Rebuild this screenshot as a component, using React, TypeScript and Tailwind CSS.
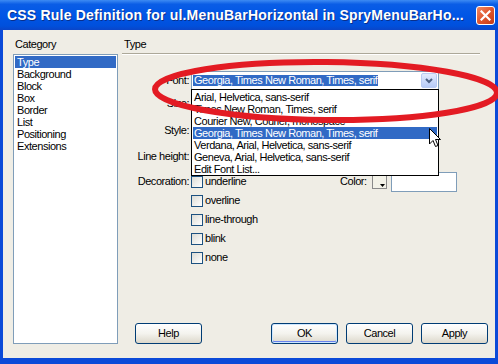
import React from "react";

const categories = ["Type", "Background", "Block", "Box", "Border", "List", "Positioning", "Extensions"];

const fonts = [
  "Arial, Helvetica, sans-serif",
  "Times New Roman, Times, serif",
  "Courier New, Courier, monospace",
  "Georgia, Times New Roman, Times, serif",
  "Verdana, Arial, Helvetica, sans-serif",
  "Geneva, Arial, Helvetica, sans-serif",
  "Edit Font List...",
];

const decorations = ["underline", "overline", "line-through", "blink", "none"];

function Checkbox() {
  return <span className="w-[12px] h-[12px] shrink-0 border border-[#1c5180] bg-gradient-to-br from-[#dcdcd5] to-white" />;
}

function XPButton({ label, isDefault }: { label: string; isDefault?: boolean }) {
  return (
    <button
      className={`w-[67px] h-[21px] rounded-[3px] border border-[#003c74] bg-gradient-to-b from-white via-[#f4f3ee] to-[#dcd8cb] text-[11px] leading-none ${
        isDefault ? "shadow-[inset_0_0_0_1px_#cee7ff,inset_0_-1px_0_1px_#6982ee]" : ""
      }`}
    >
      {label}
    </button>
  );
}

export default function App() {
  return (
    <div className="relative w-[498px] h-[364px] flex flex-col overflow-hidden bg-[#0b4ad8] font-['Liberation_Sans',Arial,sans-serif] text-[11px] tracking-[-0.45px] text-black">
      {/* Title bar */}
      <div className="h-[30px] shrink-0 flex items-center pl-[7px] pr-[3px] bg-[linear-gradient(to_bottom,#3d8bf3_0%,#0a5de6_14%,#0056e6_50%,#0050dc_86%,#0a45c8_100%)]">
        <span className="text-white font-bold text-[14px] tracking-[0.2px] [text-shadow:1px_1px_0_#0a2f8a]">
          CSS Rule Definition for ul.MenuBarHorizontal in SpryMenuBarHo...
        </span>
        <button className="ml-auto w-[19px] h-[19px] rounded-[3px] border border-white bg-gradient-to-br from-[#f08a64] via-[#e0552c] to-[#c43b16] flex items-center justify-center">
          <svg width="11" height="11" viewBox="0 0 11 11">
            <path d="M1.5 1.5 L9.5 9.5 M9.5 1.5 L1.5 9.5" stroke="white" strokeWidth="2.2" strokeLinecap="square" />
          </svg>
        </button>
      </div>

      {/* Body */}
      <div className="flex-1 flex mx-[3px] mb-[6px] bg-[#efede5] pt-[8px] pb-[14px] pl-[10px] pr-[7px] gap-[4px]">
        {/* Category column */}
        <div className="w-[105px] flex flex-col">
          <div className="h-[13px] leading-[13px] pl-[2px]">Category</div>
          <div className="mt-[3px] h-[290px] border border-[#7f9db9] bg-white pt-px px-px flex flex-col">
            {categories.map((c, i) => (
              <div
                key={c}
                className={`h-[12px] leading-[12px] pl-[2px] ${i === 0 ? "bg-[#316ac5] text-white" : ""}`}
              >
                {c}
              </div>
            ))}
          </div>
        </div>

        {/* Type panel */}
        <div className="flex-1 flex flex-col">
          <div className="h-[13px] leading-[13px] pl-[2px]">Type</div>
          <div className="mt-[2px] mr-[8px] h-px bg-[#aca899] shadow-[0_1px_0_white]" />

          <div className="mt-[17px] flex flex-col">
            {/* Font */}
            <div className="h-[19px] flex items-center">
              <span className="w-[67px] text-right">Font:</span>
              <div className="relative ml-[2px] w-[248px] h-[19px] border border-[#7f9db9] bg-white flex items-center pl-px pr-[1px]">
                <span className="bg-[#316ac5] text-white px-px leading-[11px]">
                  Georgia, Times New Roman, Times, serif
                </span>
                <span className="ml-auto w-[16px] h-[15px] rounded-[2px] border border-[#b9cbf3] bg-gradient-to-b from-[#e3ebfd] to-[#b7cbf7] flex items-center justify-center">
                  <svg width="8" height="6" viewBox="0 0 8 6">
                    <path d="M1 1 L4 4 L7 1" stroke="#4d6185" strokeWidth="2" fill="none" />
                  </svg>
                </span>

                {/* Open list */}
                <div className="absolute left-[-1px] top-[17px] w-[248px] z-10 border border-black bg-white pt-px px-px">
                  {fonts.map((f, i) => (
                    <div
                      key={f}
                      className={`h-[12px] leading-[12px] pl-px whitespace-nowrap ${i === 3 ? "bg-[#316ac5] text-white" : ""}`}
                    >
                      {f}
                    </div>
                  ))}
                </div>
              </div>
            </div>

            {/* Size */}
            <div className="mt-[4px] h-[19px] flex items-center">
              <span className="w-[67px] text-right">Size:</span>
            </div>
            {/* Style */}
            <div className="mt-[8px] h-[19px] flex items-center">
              <span className="w-[67px] text-right">Style:</span>
            </div>
            {/* Line height */}
            <div className="mt-[7px] h-[19px] flex items-center">
              <span className="w-[67px] text-right">Line height:</span>
            </div>

            {/* Decoration */}
            <div className="mt-[6px] flex">
              <span className="w-[67px] h-[19px] leading-[19px] text-right">Decoration:</span>
              <div className="ml-[2px] flex flex-col">
                {decorations.map((d, i) => (
                  <div key={d} className="h-[19px] flex items-center">
                    <div className="w-[149px] flex items-center gap-[2px]">
                      <Checkbox />
                      <span>{d}</span>
                    </div>
                    {i === 0 && (
                      <div className="flex items-center">
                        <span>Color:</span>
                        <span className="ml-[5px] w-[15px] h-[15px] border border-[#8a8a8a] bg-[#f3f2e8] relative">
                          <svg className="absolute right-[1px] bottom-[1px]" width="5" height="3" viewBox="0 0 5 3">
                            <path d="M0 0 H5 L2.5 3 Z" fill="black" />
                          </svg>
                        </span>
                        <span className="ml-[4px] w-[66px] h-[20px] border border-[#7f9db9] bg-white" />
                      </div>
                    )}
                  </div>
                ))}
              </div>
            </div>
          </div>

          <div className="flex-1" />

          {/* Buttons */}
          <div className="flex items-end pl-[13px]">
            <XPButton label="Help" />
            <div className="ml-auto flex gap-[8px]">
              <XPButton label="OK" isDefault />
              <XPButton label="Cancel" />
              <XPButton label="Apply" />
            </div>
          </div>
        </div>
      </div>

      {/* Red annotation ellipse */}
      <svg className="absolute left-0 top-0 pointer-events-none z-20" width="498" height="364" viewBox="0 0 498 364">
        <ellipse cx="326" cy="91" rx="171" ry="29" fill="none" stroke="#e31b23" strokeWidth="6" transform="rotate(0.6 326 91)" />
      </svg>

      {/* Mouse cursor */}
      <svg className="absolute left-[429px] top-[128px] z-30" width="13" height="21" viewBox="0 0 13 21">
        <path d="M0.5 0.5 L0.5 16 L4 12.5 L6.5 18.5 L9 17.5 L6.5 11.5 L11.5 11.5 Z" fill="white" stroke="black" strokeWidth="1" strokeLinejoin="round" />
      </svg>
    </div>
  );
}
